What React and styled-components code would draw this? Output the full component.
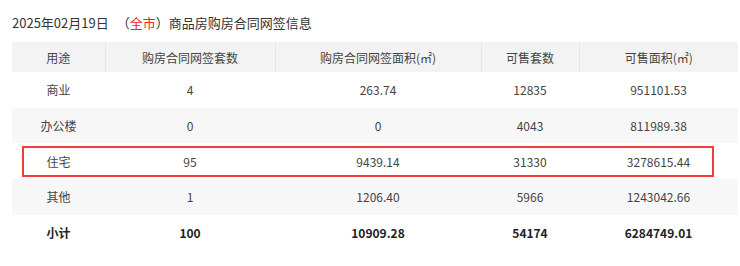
import React from 'react'
import styled, { createGlobalStyle } from 'styled-components'

const rows = [
  ['商业', '4', '263.74', '12835', '951101.53'],
  ['办公楼', '0', '0', '4043', '811989.38'],
  ['住宅', '95', '9439.14', '31330', '3278615.44'],
  ['其他', '1', '1206.40', '5966', '1243042.66'],
]
const total = ['小计', '100', '10909.28', '54174', '6284749.01']
const widths = [93, 170, 206, 98, 159]

export default function App() {
  return <Page>
    <GlobalStyle />
    <Title>
      2025年02月19日<Gap />（<City>全市</City>）商品房购房合同网签信息
    </Title>
    <TableWrap>
      <Table>
        <colgroup>
          {widths.map((w, i) => <col key={i} style={{ width: w }} />)}
        </colgroup>
        <thead>
          <tr>
            <Th>用途</Th>
            <Th>购房合同网签套数</Th>
            <Th>购房合同网签面积(㎡)</Th>
            <Th>可售套数</Th>
            <Th>可售面积(㎡)</Th>
          </tr>
        </thead>
        <tbody>
          {rows.map((r, i) => <Row key={i} $odd={i % 2 === 1}>
            {r.map((c, j) => <Td key={j}>{c}</Td>)}
          </Row>)}
          <Row>
            {total.map((c, j) => <Td key={j} $bold>{c}</Td>)}
          </Row>
        </tbody>
      </Table>
      <Highlight />
    </TableWrap>
  </Page>
}

const GlobalStyle = createGlobalStyle`
body {
  margin: 0;
  background: #fff;
  font-family: "Microsoft YaHei", "Noto Sans CJK SC", "Noto Sans", sans-serif;
  color: #333;
}
`

const Page = styled.div`
width: 740px;
height: 266px;
padding: 13px 2px 0 12px;
box-sizing: border-box;
`

const Title = styled.div`
font-size: 13px;
line-height: 20px;
height: 20px;
color: #333;
display: flex;
align-items: center;
`

const Gap = styled.span`
display: inline-block;
width: 8px;
`

const City = styled.span`
color: #f22;
`

const TableWrap = styled.div`
position: relative;
margin-top: 9px;
width: 726px;
`

const Table = styled.table`
width: 726px;
border-collapse: collapse;
table-layout: fixed;
font-size: 12px;
`

const Th = styled.th`
height: 30px;
padding: 0;
background: #f3f3f3;
font-weight: normal;
color: #444;
border-left: 1px solid #e6e6e6;
&:first-child { border-left: none; }
`

const Row = styled.tr`
background: ${p => p.$odd ? '#f7f7f7' : '#fff'};
`

const Td = styled.td`
height: 35.7px;
padding: 0;
text-align: center;
color: ${p => p.$bold ? '#222' : '#444'};
font-weight: ${p => p.$bold ? 'bold' : 'normal'};
`

const Highlight = styled.div`
position: absolute;
left: 10px;
top: 104px;
width: 692px;
height: 31px;
border: 2px solid #f43c3c;
box-sizing: border-box;
pointer-events: none;
`
